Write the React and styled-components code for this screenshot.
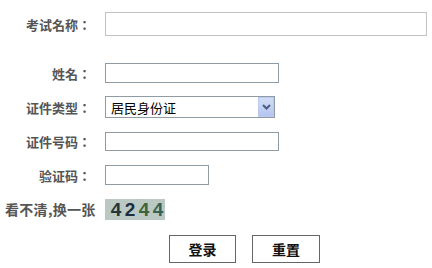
import React from "react";
import styled, { createGlobalStyle } from "styled-components";

const Global = createGlobalStyle`
  html, body { margin: 0; padding: 0; background: #fff; }
  body { font-family: "Noto Sans CJK SC", "Noto Sans", sans-serif; }
  * { box-sizing: border-box; }
`;

const Form = styled.form`
  display: flex;
  flex-direction: column;
  padding-top: 12px;
  width: 432px;
  height: 268px;
  overflow: hidden;
`;

const Row = styled.div`
  display: flex;
  align-items: center;
  height: ${(p) => p.$h || 34}px;
  margin-top: ${(p) => p.$mt || 0}px;
`;

const Label = styled.label`
  width: 91px;
  margin-right: 14px;
  text-align: right;
  font-family: "Noto Sans CJK TC", "Noto Sans CJK SC", sans-serif;
  font-size: 13px;
  font-weight: bold;
  color: #555;
  white-space: nowrap;
  line-height: 1;
`;

const Hint = styled.span`
  width: 94px;
  margin-right: 11px;
  padding-left: 5px;
  text-align: left;
  font-size: 14px;
  font-weight: bold;
  color: #555;
  white-space: nowrap;
  line-height: 1;
  letter-spacing: 0.3px;
`;

const Input = styled.input`
  display: block;
  width: ${(p) => p.$w}px;
  height: ${(p) => p.$h || 20}px;
  border: 1px solid ${(p) => (p.$light ? "#c3c3c3" : "#8f9ca6")};
  background: #fff;
  padding: 0 3px;
  margin: 0;
  outline: none;
  font-size: 13px;
`;

const SelectWrap = styled.div`
  position: relative;
  width: 170px;
  height: 22px;
`;

const Select = styled.select`
  appearance: none;
  -webkit-appearance: none;
  display: block;
  width: 100%;
  height: 100%;
  border: 1px solid #8f9ca6;
  background: #fff;
  border-radius: 0;
  padding: 0 0 0 5px;
  margin: 0;
  font-family: "Noto Sans CJK SC", sans-serif;
  font-size: 13px;
  color: #000;
  outline: none;
`;

const Arrow = styled.span`
  position: absolute;
  top: 1px;
  right: 1px;
  width: 16px;
  height: 20px;
  border: 1px solid #b9c9ef;
  background: linear-gradient(#d3ddf7, #b4c5ef);
  display: flex;
  align-items: center;
  justify-content: center;
  pointer-events: none;
`;

const Captcha = styled.div`
  position: relative;
  width: 60px;
  height: 21px;
  background: #b7c4bf;
  overflow: hidden;
  display: flex;
  align-items: center;
  padding-left: 4px;
`;

const Noise = styled.svg`
  position: absolute;
  inset: 0;
`;

const Digit = styled.span`
  position: relative;
  font-family: "Liberation Sans", sans-serif;
  font-weight: bold;
  font-size: 19px;
  line-height: 1;
  width: 14px;
  text-align: center;
  color: ${(p) => p.$c};
`;

const Button = styled.button`
  width: ${(p) => p.$w}px;
  height: 28px;
  margin: 0;
  margin-right: ${(p) => p.$mr || 0}px;
  border: 1px solid #666;
  background: #fff;
  font-family: "Noto Sans CJK SC", sans-serif;
  font-size: 14px;
  font-weight: bold;
  color: #111;
  padding: 0;
`;

const Buttons = styled.div`
  display: flex;
  padding-left: 169px;
  margin-top: 9px;
`;

export default function App() {
  return (
    <>
      <Global />
      <Form onSubmit={(e) => e.preventDefault()}>
        <Row $h={24}>
          <Label>考试名称：</Label>
          <Input $w={322} $h={24} $light />
        </Row>
        <Row $mt={20}>
          <Label>姓名：</Label>
          <Input $w={174} $h={20} />
        </Row>
        <Row>
          <Label>证件类型：</Label>
          <SelectWrap>
            <Select defaultValue="1">
              <option value="1">居民身份证</option>
            </Select>
            <Arrow>
              <svg width="9" height="6" viewBox="0 0 9 6">
                <path d="M1 1 L4.5 4.5 L8 1" fill="none" stroke="#4a5d82" strokeWidth="2" />
              </svg>
            </Arrow>
          </SelectWrap>
        </Row>
        <Row>
          <Label>证件号码：</Label>
          <Input $w={174} $h={19} />
        </Row>
        <Row>
          <Label>验证码：</Label>
          <Input $w={104} $h={20} />
        </Row>
        <Row>
          <Hint>看不清,换一张</Hint>
          <Captcha>
            <Noise width="60" height="21">
              <filter id="n">
                <feTurbulence type="fractalNoise" baseFrequency="0.9" numOctaves="2" seed="3" />
                <feColorMatrix type="matrix" values="0 0 0 0 0.55  0 0 0 0 0.65  0 0 0 0 0.62  0 0 0 0.6 0" />
              </filter>
              <rect width="60" height="21" filter="url(#n)" />
            </Noise>
            <Digit $c="#253538">4</Digit>
            <Digit $c="#1c2e40">2</Digit>
            <Digit $c="#3e6339">4</Digit>
            <Digit $c="#356255">4</Digit>
          </Captcha>
        </Row>
        <Buttons>
          <Button $w={67} $mr={16} type="submit">登录</Button>
          <Button $w={68} type="reset">重置</Button>
        </Buttons>
      </Form>
    </>
  );
}
